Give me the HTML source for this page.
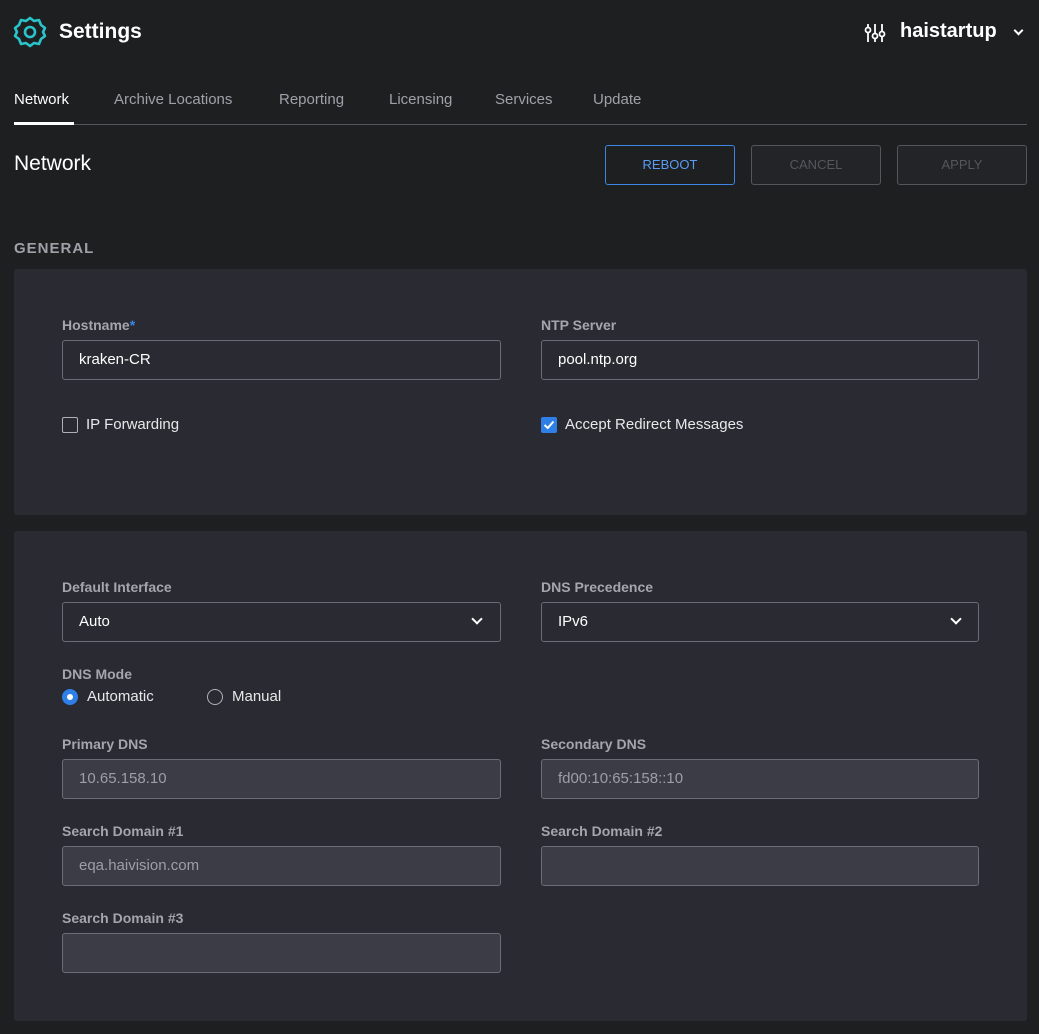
<!DOCTYPE html>
<html><head><style>
*{box-sizing:border-box;margin:0;padding:0}
body{width:1039px;height:1034px;background:#1e1f21;font-family:"Liberation Sans",sans-serif;color:#e8e8ea;position:relative;overflow:hidden}
.a{position:absolute}
.lbl{position:absolute;font-size:14px;color:#a4a5ad;font-weight:bold}
.inp{position:absolute;height:40px;border:1px solid #6b6c75;border-radius:3px;font-size:15px;padding:0 16px;line-height:38px;color:#fff}
.dis{background:#3c3c46;color:#9d9ea6}
.panel{position:absolute;left:14px;width:1013px;background:#2a2a32;border-radius:3px}
.btn{position:absolute;top:145px;width:130px;height:40px;border:1px solid #55565c;border-radius:3px;text-align:center;line-height:38px;font-size:13px;color:#55565e;background:#232427}
.tab{position:absolute;top:91px;font-size:15px;color:#a0a1a8}
.chev{position:absolute;width:8px;height:8px;border-right:2px solid #fff;border-bottom:2px solid #fff;transform:rotate(45deg)}
</style></head><body>
<svg class="a" style="left:13px;top:15px" width="34" height="34" viewBox="0 0 34 34"><path d="M17 3 L21 6 L26 5 L28 10 L32 13 L30 17 L32 21 L28 24 L26 29 L21 28 L17 31 L13 28 L8 29 L6 24 L2 21 L4 17 L2 13 L6 10 L8 5 L13 6 Z" fill="none" stroke="#2ac4cc" stroke-width="2.6" stroke-linejoin="round"/><circle cx="17" cy="17" r="5" fill="none" stroke="#2ac4cc" stroke-width="2.6"/></svg>
<div class="a" style="left:59px;top:20px;font-size:21px;font-weight:bold;color:#fff">Settings</div>
<svg class="a" style="left:864px;top:22px" width="22" height="22" viewBox="0 0 22 22" fill="none" stroke="#fff" stroke-width="1.8"><line x1="4" y1="2" x2="4" y2="20"/><line x1="11" y1="2" x2="11" y2="20"/><line x1="18" y1="2" x2="18" y2="20"/><circle cx="4" cy="8" r="2.5" fill="#1e1f21"/><circle cx="11" cy="14" r="2.5" fill="#1e1f21"/><circle cx="18" cy="12" r="2.5" fill="#1e1f21"/></svg>
<div class="a" style="left:900px;top:20px;font-size:20px;font-weight:bold;color:#fff">haistartup</div>
<div class="chev" style="left:1015px;top:27px;width:7px;height:7px"></div>
<div class="tab" style="left:14px;color:#fff">Network</div>
<div class="tab" style="left:114px">Archive Locations</div>
<div class="tab" style="left:279px">Reporting</div>
<div class="tab" style="left:389px">Licensing</div>
<div class="tab" style="left:495px">Services</div>
<div class="tab" style="left:593px">Update</div>
<div class="a" style="left:14px;top:124px;width:1013px;height:1px;background:#55565c"></div>
<div class="a" style="left:14px;top:122px;width:60px;height:3px;background:#fff"></div>
<div class="a" style="left:14px;top:152px;font-size:21px;color:#fff">Network</div>
<div class="btn" style="left:605px;border-color:#3d86e6;color:#5a9cf0;background:#1e1f21">REBOOT</div>
<div class="btn" style="left:751px">CANCEL</div>
<div class="btn" style="left:897px">APPLY</div>
<div class="a" style="left:14px;top:240px;font-size:15px;color:#a0a1a8;letter-spacing:1px;font-weight:bold">GENERAL</div>
<div class="panel" style="top:269px;height:246px"></div>
<div class="lbl" style="left:62px;top:317px">Hostname<span style="color:#3d86e6">*</span></div>
<div class="inp" style="left:62px;top:340px;width:439px">kraken-CR</div>
<div class="lbl" style="left:541px;top:317px">NTP Server</div>
<div class="inp" style="left:541px;top:340px;width:438px">pool.ntp.org</div>
<div class="a" style="left:62px;top:417px;width:16px;height:16px;border:1.5px solid #b0b1b8;border-radius:2px"></div>
<div class="a" style="left:86px;top:416px;font-size:15px">IP Forwarding</div>
<div class="a" style="left:541px;top:417px;width:16px;height:16px;background:#2f7fe8;border-radius:2px"><svg width="16" height="16"><path d="M3.5 8 L6.8 11 L12.5 4.5" stroke="#fff" stroke-width="2" fill="none"/></svg></div>
<div class="a" style="left:565px;top:416px;font-size:15px">Accept Redirect Messages</div>
<div class="panel" style="top:531px;height:490px"></div>
<div class="lbl" style="left:62px;top:579px">Default Interface</div>
<div class="inp" style="left:62px;top:602px;width:439px">Auto</div>
<div class="chev" style="left:473px;top:615px"></div>
<div class="lbl" style="left:541px;top:579px">DNS Precedence</div>
<div class="inp" style="left:541px;top:602px;width:438px">IPv6</div>
<div class="chev" style="left:952px;top:615px"></div>
<div class="lbl" style="left:62px;top:666px">DNS Mode</div>
<div class="a" style="left:62px;top:689px;width:16px;height:16px;border-radius:50%;background:#2f7fe8"><div class="a" style="left:5px;top:5px;width:6px;height:6px;border-radius:50%;background:#fff"></div></div>
<div class="a" style="left:87px;top:688px;font-size:15px">Automatic</div>
<div class="a" style="left:207px;top:689px;width:16px;height:16px;border-radius:50%;border:1.5px solid #b0b1b8"></div>
<div class="a" style="left:232px;top:688px;font-size:15px">Manual</div>
<div class="lbl" style="left:62px;top:736px">Primary DNS</div>
<div class="inp dis" style="left:62px;top:759px;width:439px">10.65.158.10</div>
<div class="lbl" style="left:541px;top:736px">Secondary DNS</div>
<div class="inp dis" style="left:541px;top:759px;width:438px">fd00:10:65:158::10</div>
<div class="lbl" style="left:62px;top:823px">Search Domain #1</div>
<div class="inp dis" style="left:62px;top:846px;width:439px">eqa.haivision.com</div>
<div class="lbl" style="left:541px;top:823px">Search Domain #2</div>
<div class="inp dis" style="left:541px;top:846px;width:438px"></div>
<div class="lbl" style="left:62px;top:910px">Search Domain #3</div>
<div class="inp dis" style="left:62px;top:933px;width:439px"></div>
</body></html>
